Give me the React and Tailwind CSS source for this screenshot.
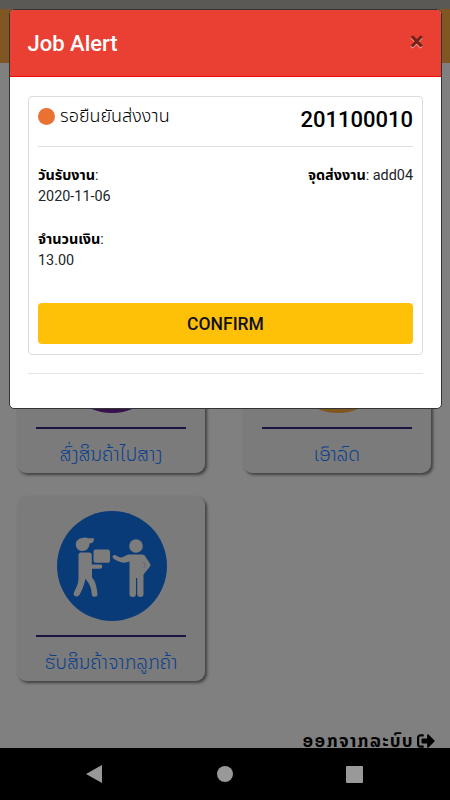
import { FaSignOutAlt } from "react-icons/fa";

const LAO = "font-['Noto_Sans_Lao','Noto_Sans','DejaVu_Sans',sans-serif]";

function ServiceCard({ label, children, labelClass }) {
  return (
    <div className="flex h-[185px] w-[188px] flex-col items-center rounded-[9px] bg-[#7b7b7b] pt-[15px] shadow-[2px_2px_3px_#404040]">
      <div className="ml-px h-[110px] w-[110px]">{children}</div>
      <div className="mt-[14px] h-[2px] w-[150px] shrink-0 bg-[#1b1440]" />
      <div className={`${LAO} mt-[14px] h-6 whitespace-nowrap leading-6 text-[#0b408c] ${labelClass}`}>{label}</div>
    </div>
  );
}

function DeliveryIcon() {
  return (
    <svg viewBox="0 0 110 110" className="h-full w-full">
      <circle cx="55" cy="55" r="55" fill="#093b78" />
      <g fill="#7c7c7c">
        <path d="M25 27c3-1 5-.5 6 .2h6c0 3-1 5-4.500 5.300 0 4.500-3 7.500-7 7.500-4 0-6.700-3-6.700-6.800 0-3 2.500-5.500 6.200-6.200z" />
        <rect x="36.500" y="38.500" width="16.500" height="13.200" rx="2" />
        <path d="M24 41.500h8q2.800 0 2.800 3v9h8.500q2 0 2 2t-2 2.200H35v8.500q4 5 4.500 10l1 7q0 2.500-2.800 2.500t-3-2.500c-.3-6-1.500-9.500-6.200-15.500-1.500 7-3.500 11.500-6 16q-1.300 2.500-4 1.500t-1.500-4c3-6 4.500-9 4.500-15V44.500q0-3 2.500-3z" />
        <circle cx="79" cy="35" r="6.800" />
        <path d="M57 44c1.500-.5 3 1 5 2s4 .5 6-1 3.500-1.500 5-1.500h12c2 0 3 1 4 3l4 6q1 1.500 0 3l-6.500 8v19.500q0 3-3 3t-3.300-3V67h-1.200v16q0 3-3.300 3t-3.200-3V50.500c-5 2-8.500 1.500-15.500-2.500-2-1.500-2-3.500 0-4z" />
      </g>
      <path d="m86.500 51 2 3-2 3" fill="none" stroke="#4b6480" strokeWidth="0.700" />
    </svg>
  );
}

function JobModal() {
  return (
    <div className="absolute left-[9px] top-[9px] h-[400px] w-[433px] overflow-hidden rounded-[5px] border border-[#333] bg-white text-black">
      <div className="flex h-[67px] items-start justify-between border-b border-[#fa0808] bg-[#ea4033] pl-[17.500px] pr-[17.500px]">
        <h1 className="mt-[18px] text-[22px] font-medium leading-8 text-white">Job Alert</h1>
        <button className="mt-[17px] h-7 text-[26px] font-bold leading-7 text-[#75201a] [text-shadow:0_1px_0_#fff9]">×</button>
      </div>
      <div className="px-[18px] pt-[19px]">
        <div className="h-[259px] rounded-[4px] border border-[#dcdcdc] px-[9px]">
          <div className="flex h-[50px] items-start justify-between border-b border-[#dfdfdf]">
            <div className="flex items-center gap-[5px] pt-[6px]">
              <span className="h-[17px] w-[17px] rounded-full bg-[#e97132]" />
              <span className="whitespace-nowrap text-[18px] font-light leading-[26px] text-black">รอยืนยันส่งงาน</span>
            </div>
            <span className="mt-[9px] text-[22px] font-medium leading-7">201100010</span>
          </div>
          <div className="flex justify-between pt-[18px] text-[14.400px] leading-[21.300px] text-[#212529]">
            <div>
              <div><b className="text-black">วันรับงาน</b>:</div>
              <div>2020-11-06</div>
              <div className="mt-[21px]"><b className="text-black">จำนวนเงิน</b>:</div>
              <div>13.00</div>
            </div>
            <div><b className="text-black">จุดส่งงาน</b>: add04</div>
          </div>
          <button className="mt-[32px] block h-[41px] w-full rounded-[4px] bg-[#ffc107] text-[17.500px] font-medium text-[#10101f]">CONFIRM</button>
        </div>
        <div className="mt-[18px] border-t border-[#e5e5e5]" />
      </div>
    </div>
  );
}

export default function App() {
  return (
    <div className="relative flex h-[800px] w-[450px] flex-col overflow-hidden bg-[#808080] font-[Roboto,'Noto_Sans_Thai',sans-serif]">
      <div className="h-[9px] shrink-0 bg-[#5a5956]" />
      <div className="h-[54px] shrink-0 bg-[#805722]" />
      <main className="h-[685px] shrink-0 pl-[17px] pr-[19px] pt-[225px]">
        <div className="grid grid-cols-[188px_188px] justify-between gap-y-[23px]">
          <ServiceCard label="ສົ່ງສິນຄ້າໄປສາງ" labelClass="text-[19px] font-light">
            <div className="h-full rounded-full bg-[#35114d]" />
          </ServiceCard>
          <ServiceCard label="ເອົາລົດ" labelClass="text-[19px] font-light">
            <div className="h-full rounded-full bg-[#80561f]" />
          </ServiceCard>
          <ServiceCard label="ຮັບສິນຄ້າຈາກລູກຄ້າ" labelClass="text-[19px] font-light">
            <DeliveryIcon />
          </ServiceCard>
        </div>
        <div className="mr-[-4px] mt-[51px] flex h-[17px] items-center justify-end gap-[3px] text-black">
          <span className={`${LAO} whitespace-nowrap text-[17px] font-bold leading-4 tracking-[1.600px]`}>ອອກຈາກລະບົບ</span>
          <FaSignOutAlt className="h-[18px] w-[18px]" />
        </div>
      </main>
      <nav className="flex h-[52px] shrink-0 items-center bg-black pl-[86px]">
        <svg className="h-[18px] w-4" viewBox="0 0 16 18"><path d="M0 9 16 0v18z" fill="#999" /></svg>
        <span className="ml-[115px] h-4 w-4 rounded-full bg-[#999]" />
        <span className="ml-[113px] h-[17px] w-[17px] rounded-[1px] bg-[#999]" />
      </nav>
      <JobModal />
    </div>
  );
}
